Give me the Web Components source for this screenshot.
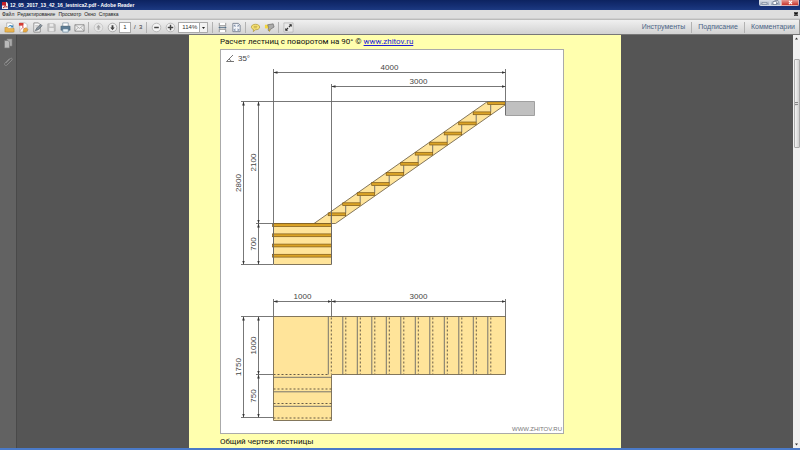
<!DOCTYPE html>
<html lang="ru">
<head>
<meta charset="utf-8">
<title>12_05_2017_13_42_16_lestnica2.pdf - Adobe Reader</title>
<style>
html,body{margin:0;height:100%}
body{font-family:"Liberation Sans",Arial,sans-serif;overflow:hidden;background:#555}
</style>
</head>
<body>
<reader-window>
  <title-bar slot="title">12_05_2017_13_42_16_lestnica2.pdf - Adobe Reader</title-bar>
  <menu-bar slot="menu"></menu-bar>
  <reader-toolbar slot="tools"></reader-toolbar>
  <side-panel slot="side"></side-panel>
  <document-page slot="page">
    <span slot="heading">Расчет лестниц с поворотом на 90° ©</span>
    <stair-drawing></stair-drawing>
    <span slot="caption">Общий чертеж лестницы</span>
  </document-page>
  <scroll-strip slot="scroll"></scroll-strip>
</reader-window>

<script>
const define = (name, html, setup) => customElements.define(name, class extends HTMLElement {
  constructor() {
    super();
    this.attachShadow({ mode: 'open' });
    const t = document.createElement('template');
    t.innerHTML = html;
    this.shadowRoot.append(t.content.cloneNode(true));
    if (setup) setup(this.shadowRoot, this);
  }
});

define('reader-window', `
<style>
:host{display:flex;flex-direction:column;height:100vh;box-sizing:border-box;border-bottom:2px solid #4a7ac8}
main{display:flex;flex:1;min-height:0;background:#555;border-top:1px solid #777;box-sizing:border-box}
section{flex:1;min-width:0;display:flex;justify-content:center;overflow:hidden}
</style>
<slot name="title"></slot><slot name="menu"></slot><slot name="tools"></slot>
<main><slot name="side"></slot><section><slot name="page"></slot></section><slot name="scroll"></slot></main>`);

define('title-bar', `
<style>
:host{display:flex;align-items:flex-start;height:10px;background:linear-gradient(#0d2360,#152f74 60%,#1d3a82);color:#fff;font-weight:bold;font-size:5px;line-height:11px}
h1{font:inherit;margin:0;flex:1;white-space:nowrap}
.logo{width:6px;height:7px;margin:2px 2px 0}
.ctl{display:flex;margin-right:1px}
button{all:unset;box-sizing:border-box;height:6px;width:11px;display:grid;place-items:center;background:linear-gradient(#dde2ea,#98a5b8);border:1px solid #d0d7e2;border-top:0}
button:first-child{border-radius:0 0 0 2px}
button.x{width:18px;background:linear-gradient(#e59a94,#c8352c);border-color:#e0b0b0;border-radius:0 0 2px 0}
button svg{width:7px;height:5px;display:block}
</style>
<svg class="logo" viewBox="0 0 6 7"><path d="M0 0H4.500L6 1.500V7H0Z" fill="#f4eeee"/><path d="M0 0H4V3.500H0Z" fill="#c8202a"/><path d="M1 6C3 4.500 3.300 3 3 1.800C3.200 4 4 4.800 5.400 4.900C3.600 4.600 2 5 1 6Z" fill="none" stroke="#b3202a" stroke-width=".7"/></svg>
<h1><slot></slot></h1>
<div class="ctl">
<button aria-label="Свернуть"><svg viewBox="0 0 7 5"><path d="M1 2.500H6V4H1Z" fill="#fff" stroke="#50607a" stroke-width=".5"/></svg></button>
<button aria-label="Развернуть"><svg viewBox="0 0 7 5"><path d="M2.500.5H6V3.500H4.500M1 1.500H4.500V4.500H1Z" fill="#fff" stroke="#50607a" stroke-width=".6"/></svg></button>
<button class="x" aria-label="Закрыть"><svg viewBox="0 0 7 5"><path d="M2 .8L5 4.200M5 .8L2 4.200" stroke="#fff" stroke-width="1.200"/></svg></button>
</div>`);

define('menu-bar', `
<style>
:host{display:flex;align-items:center;height:9px;background:#dedede;border-bottom:1px solid #cfcfcf;box-sizing:border-box;color:#222;font-size:5px;line-height:9px}
nav{display:flex;gap:3px;padding-left:2px;flex:1}
button{all:unset;white-space:nowrap}
.c{width:4px;height:5px;margin-right:2px}
.c svg{width:4px;height:4px;display:block}
</style>
<nav><button>Файл</button><button>Редактирование</button><button>Просмотр</button><button>Окно</button><button>Справка</button></nav>
<button class="c" aria-label="Закрыть документ"><svg viewBox="0 0 4 4"><path d="M0 0H4V4H0Z" fill="#777"/><path d="M.5.5L3.500 3.500M3.500.5L.5 3.500" stroke="#111" stroke-width="1.200"/></svg></button>`);

const icons = {
open:'<path d="M3 1H8L10 3V11H3Z" fill="#fff" stroke="#999" stroke-width=".7"/><path d="M1 6H4L5 7H11V11H1Z" fill="#eab54f" stroke="#b28128" stroke-width=".5"/><path d="M4.500 6C4.500 3.500 7 2.500 9 4L10 3V6H7L8 5C6.500 4.300 5.500 5 4.500 6Z" fill="#3c86b9"/>',
pdf:'<path d="M2 1H8L10 3V11H2Z" fill="#fff" stroke="#aaa" stroke-width=".7"/><path d="M1 1H6V4H1Z" fill="#d33c32"/><path d="M2.500 9C5 7 5.500 5 5 4C5.500 6.500 7 8 9 7.500" stroke="#c33" fill="none" stroke-width=".6"/><path d="M6 7.500L9 6L11 8.500L9 11H5.500Z" fill="#e8aa43" stroke="#af7622" stroke-width=".4"/>',
sign:'<path d="M2 1H7L9 3V11H2Z" fill="#f7f7f7" stroke="#777" stroke-width=".8"/><path d="M3.500 4H7M3.500 5.500H6" stroke="#999" stroke-width=".6"/><path d="M3.500 9.500L5 6.500L9.500 2.500L11 4L7 8.500Z" fill="#87929c" stroke="#4d5860" stroke-width=".6"/>',
save:'<path d="M2 2H9L10 3V10H2Z" fill="#c1c1c1" stroke="#aaa" stroke-width=".8"/><path d="M4 2H8V5H4ZM3.500 6.500H8.500V10H3.500Z" fill="#e9e9e9"/>',
print:'<path d="M3 1H9V5H3Z" fill="#fff" stroke="#71889a" stroke-width=".7"/><path d="M1 4.500H11V9H1Z" fill="#5e7e96" stroke="#3b5568" stroke-width=".5"/><path d="M3 7.500H9V11H3Z" fill="#e7f3fa" stroke="#486b83" stroke-width=".6"/>',
mail:'<path d="M1 3H11V10H1Z" fill="#eee" stroke="#777" stroke-width=".8"/><path d="M1 3L6 7L11 3M1 10L4.500 6M11 10L7.500 6" fill="none" stroke="#888" stroke-width=".6"/>',
up:'<circle cx="6" cy="6" r="4.700" fill="#e6e6e6" stroke="#bbb" stroke-width=".7"/><path d="M6 3L8.500 6H7V8.500H5V6H3.500Z" fill="#a5a5a5"/>',
down:'<circle cx="6" cy="6" r="4.700" fill="#f1f1f1" stroke="#999" stroke-width=".8"/><path d="M6 9L8.500 6H7V3.500H5V6H3.500Z" fill="#444"/>',
minus:'<circle cx="6" cy="6" r="4.700" fill="#f4f4f4" stroke="#aaa" stroke-width=".8"/><path d="M3.500 6H8.500" stroke="#444" stroke-width="1.600"/>',
plus:'<circle cx="6" cy="6" r="4.700" fill="#f4f4f4" stroke="#aaa" stroke-width=".8"/><path d="M3 6H9M6 3V9" stroke="#444" stroke-width="1.600"/>',
width:'<path d="M2.500 1V4H9.500V1M2.500 11V8H9.500V11" fill="#fff" stroke="#777" stroke-width=".8"/><path d="M2 6H10M3.500 4.800L2 6L3.500 7.200M8.500 4.800L10 6L8.500 7.200" fill="none" stroke="#46617a" stroke-width=".8"/>',
fit:'<path d="M2 1.500H8L10 3.500V10.500H2Z" fill="#f4f6fa" stroke="#707a8a" stroke-width=".9"/><path d="M3.500 5V3.500H5M7 3.500H8.500V5M3.500 7.500V9H5M7 9H8.500V7.500M4 4L5 5M8 4L7 5M4 8.500L5 7.500M8 8.500L7 7.500" fill="none" stroke="#52698c" stroke-width=".7"/>',
note:'<path d="M6 2.500C9 2.500 10.500 4 10.500 5.500C10.500 7.500 8.500 8.500 6 8.500L3.500 10.500L4 8.200C2.500 7.800 1.500 6.800 1.500 5.500C1.500 4 3 2.500 6 2.500Z" fill="#f7e274" stroke="#a8902c" stroke-width=".7"/><path d="M4 4.800H8M4 6.300H7.500" stroke="#a38e3b" stroke-width=".6"/>',
mark:'<path d="M1 3H8V7H1Z" fill="#f4d63e"/><path d="M4 3L10 2L11 5.500L7 8L6 10L4.500 9L5 6Z" fill="#aaa" stroke="#666" stroke-width=".7"/><path d="M5 7.500L7 8.500L5.500 11Z" fill="#cda91d"/>',
full:'<path d="M1 1H11V11H1Z" fill="#e9e9e9" stroke="#aaa" stroke-width=".7"/><path d="M6.500 5.500L9 3M5.500 6.500L3 9" stroke="#333" stroke-width="1.300"/><path d="M6.500 2.500H9.500V5.500ZM2.500 6.500V9.500H5.500Z" fill="#333"/>'
};
customElements.define('tool-button', class extends HTMLElement {
  constructor() { super(); this.attachShadow({ mode: 'open' }); }
  connectedCallback() {
    this.shadowRoot.innerHTML = `<style>:host{display:block;flex:none}button{all:unset;width:14px;height:12px;display:grid;place-items:center}svg{width:11px;height:11px;display:block}</style>
<button aria-label="${this.getAttribute('label')}"><svg viewBox="0 0 12 12">${icons[this.getAttribute('icon')]}</svg></button>`;
  }
});

define('reader-toolbar', `
<style>
:host{display:flex;align-items:center;height:15px;box-sizing:border-box;background:linear-gradient(#f0f0f0,#d2d2d2);border-top:1px solid #bbb;border-right:1px solid #999;padding-left:2px;font-size:6px;color:#333}
i{flex:none;width:1px;height:11px;background:#b2b2b2;margin:0 2px}
input{all:unset;box-sizing:border-box;width:12px;height:11px;background:#fff;border:1px solid #aaa;text-align:center}
label{margin:0 2px 0 3px;white-space:pre}
.zoom{position:relative;margin:0 2px 0 1px;display:flex}
select{appearance:none;font:inherit;color:inherit;box-sizing:border-box;width:30px;height:11px;margin:0;padding:0 0 0 3px;border:1px solid #aaa;border-radius:0;background:#fff}
.zoom svg{position:absolute;right:0;top:0;width:9px;height:11px;pointer-events:none}
.tabs{margin-left:auto;display:flex;align-items:center}
.tabs button{all:unset;font-size:7px;color:#4b6486;padding:0 4px;line-height:12px}
</style>
<tool-button icon="open" label="Открыть"></tool-button><tool-button icon="pdf" label="Создать PDF"></tool-button><tool-button icon="sign" label="Подписать"></tool-button><tool-button icon="save" label="Сохранить"></tool-button><tool-button icon="print" label="Печать"></tool-button><tool-button icon="mail" label="Почта"></tool-button><i></i>
<tool-button icon="up" label="Назад"></tool-button><tool-button icon="down" label="Вперед"></tool-button>
<input id="pg" value="1" aria-label="Страница"><label for="pg">/  3</label><i></i>
<tool-button icon="minus" label="Уменьшить"></tool-button><tool-button icon="plus" label="Увеличить"></tool-button>
<span class="zoom"><select aria-label="Масштаб"><option>114%</option></select><svg viewBox="0 0 9 11"><path d="M.5.5H8.500V10.500H.5Z" fill="#f2f2f2" stroke="#aaa"/><path d="M3 5H6L4.500 7Z" fill="#222"/></svg></span><i></i>
<tool-button icon="width" label="По ширине"></tool-button><tool-button icon="fit" label="Страница целиком"></tool-button><i></i>
<tool-button icon="note" label="Заметка"></tool-button><tool-button icon="mark" label="Выделение"></tool-button><i></i>
<tool-button icon="full" label="Полный экран"></tool-button>
<div class="tabs"><button>Инструменты</button><i></i><button>Подписание</button><i></i><button>Комментарии</button></div>`);

define('side-panel', `
<style>
:host{flex:none;width:17px;box-sizing:border-box;background:#626262;border-right:1px solid #494949;display:flex;flex-direction:column;align-items:center;gap:7px;padding-top:3px}
button{all:unset;width:11px;height:11px}svg{display:block}
</style>
<button aria-label="Миниатюры"><svg width="11" height="11" viewBox="0 0 11 11"><path d="M4 1H9V8H4Z" fill="#aaa" stroke="#888" stroke-width=".6"/><path d="M1.500 2.500H5L6.500 4V10H1.500Z" fill="#bababa" stroke="#777" stroke-width=".7"/></svg></button>
<button aria-label="Вложения"><svg width="11" height="11" viewBox="0 0 11 11"><path d="M3 7L7.500 2.500C8.500 1.500 10 3 9 4L4 9C2.500 10.500.5 8.500 2 7L6.500 2.500" fill="none" stroke="#8c8c8c" stroke-width=".9"/></svg></button>`);

define('scroll-strip', `
<style>
:host{flex:none;width:7px;background:#f0f0f0;display:flex;flex-direction:column;align-items:center}
svg{width:7px;height:7px;display:block}
.gap{flex:17}.thumb{flex:88;width:6px;box-sizing:border-box;border:1px solid #aaa;border-radius:1px;background:linear-gradient(90deg,#f4f4f4,#cfcfcf);display:grid;place-items:center}
.thumb::after{content:"";width:3px;height:4px;background:repeating-linear-gradient(#888 0 1px,#ddd 1px 2px)}
.rest{flex:294}
</style>
<svg viewBox="0 0 7 7"><path d="M2 4.500H5L3.500 2.500Z" fill="#333"/></svg><div class="gap"></div><div class="thumb"></div><div class="rest"></div>
<svg viewBox="0 0 7 7"><path d="M2 2.500H5L3.500 4.500Z" fill="#333"/></svg>`);

define('document-page', `
<style>
:host{display:block;width:100%;max-width:432px;min-height:100%;box-sizing:border-box;background:#ffffae;padding:0 57px 0 31px;font:8px/14px Roboto,"Noto Sans",sans-serif;color:#111}
p{margin:0;white-space:nowrap}
p:last-of-type{line-height:16px}
a{color:#1c1cd8}
</style>
<p><slot name="heading"></slot> <a href="http://www.zhitov.ru">www.zhitov.ru</a></p>
<slot></slot>
<p><slot name="caption"></slot></p>`);

define('stair-drawing', `
<style>
:host{display:block;background:#fff;border:1px solid #aaa}
svg{display:block;width:100%;height:auto}
text{font:8px "Liberation Sans",Arial,sans-serif;fill:#444;text-anchor:middle}
.l{stroke:#686868;stroke-width:.9;fill:none}
.w{fill:#ffe49a;stroke:#75684e;stroke-width:.9}
.t{fill:#dba326;stroke:#7b5818;stroke-width:.7}
.d{stroke:#665b46;stroke-width:1;stroke-dasharray:2 2;fill:none}
</style>
<svg viewBox="221 50 342 383" role="img" aria-label="Чертеж лестницы">
<defs><marker id="a" viewBox="0 0 6 4" refX="6" refY="2" markerWidth="4" markerHeight="3" markerUnits="userSpaceOnUse" orient="auto-start-reverse"><path d="M0 0L6 2L0 4Z" fill="#333"/></marker></defs>
<path class="l" d="M233 55L226.500 61.500H234M229 59Q231 60 231 61.500"/>
<text x="244" y="61">35°</text>
<g id="side"></g>
<path d="M505.500 101.500H534.500V115.500H505.500Z" fill="#c0c0c0" stroke="#999" stroke-width=".9"/>
<path class="l" d="M273.500 69V264M331.500 84V264M505.500 69V115M241 101.500H505M241 264.500H273M256 223.500H273"/>
<g id="plan"></g>
<path class="l" d="M273.500 299V317M331.500 299V317M505.500 299V317M241 316.500H273M256 374.500H273M241 417.500H273"/>
<g id="dims" class="l"></g><g id="labels"></g>
<text x="537" y="431" style="font-size:6px;fill:#777">WWW.ZHITOV.RU</text>
</svg>`, root => {
  const at = id => root.getElementById(id);
  let side = '<path class="w" d="M487.500 101.500H505V105L335.500 223.500H314Z"/><path class="w" d="M273.500 223.500H331.500V264.500H273.500Z"/>';
  for (let i = 0; i < 12; i++) {
    const x = 487.7 - i * 14.5, y = 101.8 + i * 10.1;
    side += `<path class="l" d="M${x + 3} ${y + 3}V${y + 10}"/><rect class="t" x="${x}" y="${y}" width="17.500" height="2.800"/>`;
  }
  for (let i = 0; i < 4; i++) side += `<rect class="t" x="272.500" y="${223.700 + i * 10.2}" width="59" height="2.800"/>`;
  at('side').innerHTML = side;

  let plan = '<path class="w" d="M273.500 316.500H505.500V374.500H331.500V420.500H273.500Z"/>';
  for (let i = 0; i < 12; i++) {
    const x = 328.3 + i * 14.5;
    plan += `<path class="l" d="M${x} 316.500V374.500"/><path class="d" d="M${x + 3} 317.500V374"/>`;
  }
  for (let i = 0; i < 3; i++) plan += `<path class="d" d="M273.500 ${389 + i * 14.5}H331.500"/><path class="l" d="M273.500 ${377.3 + i * 14.5}H331.500"/>`;
  plan += '<path class="d" d="M273.500 374.500H329"/>';
  at('plan').innerHTML = plan;

  const dims = [
    [273.5, 72.5, 505.5, 72.5, '4000'], [331.5, 86.500, 505.5, 86.500, '3000'],
    [243.5, 101.5, 243.5, 264.5, '2800'], [258.5, 101.5, 258.5, 223.5, '2100'], [258.5, 223.5, 258.5, 264.5, '700'],
    [273.5, 301.5, 331.5, 301.5, '1000'], [331.5, 301.5, 505.5, 301.5, '3000'],
    [243.5, 316.5, 243.5, 417.5, '1750'], [258.5, 316.5, 258.5, 374.5, '1000'], [258.5, 374.5, 258.5, 417.5, '750']
  ];
  let lines = '', labels = '';
  for (const [x1, y1, x2, y2, s] of dims) {
    lines += `<path d="M${x1} ${y1}L${x2} ${y2}" marker-start="url(#a)" marker-end="url(#a)"/>`;
    const x = (x1 + x2) / 2, y = (y1 + y2) / 2;
    labels += y1 === y2 ? `<text x="${x}" y="${y - 3}">${s}</text>` : `<text transform="translate(${x - 3} ${y}) rotate(-90)">${s}</text>`;
  }
  at('dims').innerHTML = lines;
  at('labels').innerHTML = labels;
});
</script>
</body>
</html>
